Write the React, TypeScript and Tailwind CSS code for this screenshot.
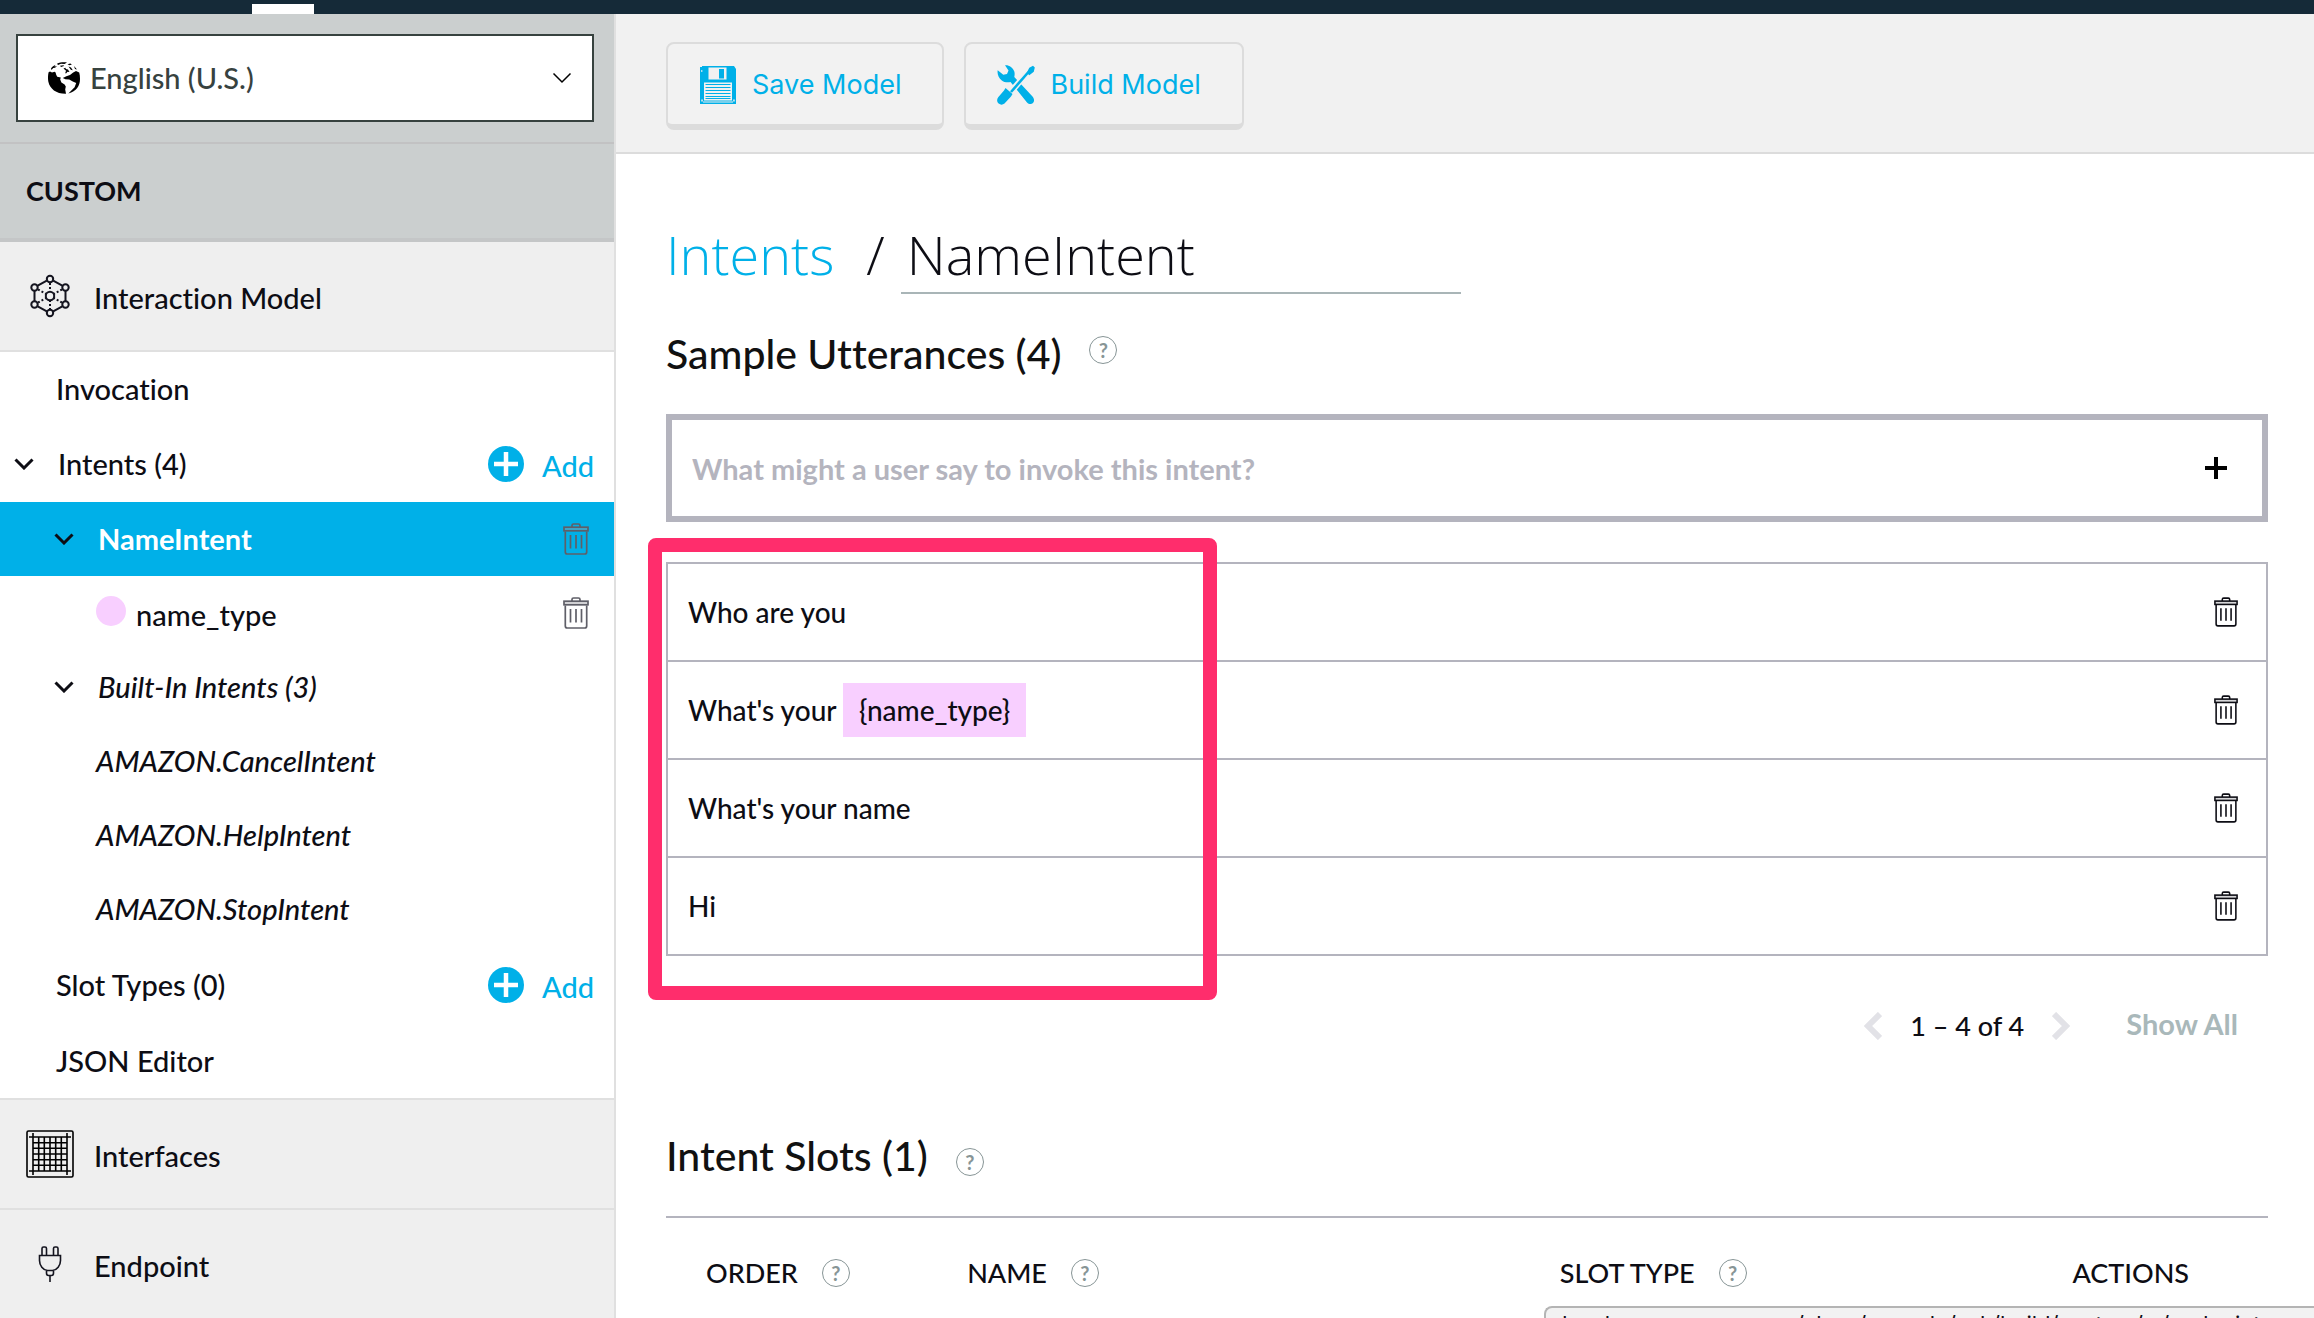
import type { ReactNode } from "react";

type IconProps = { className?: string };

function GlobeIcon() {
  return (
    <svg className="size-8 shrink-0" viewBox="0 0 32 32" fill="#000" aria-hidden="true">
      <path d="M0.6 10.2L2 9.6l2 .8 2.6-.6 1 .6.6 2.400 1 2 3.600.8-.6 1.800 1.200 3 3.200 2.200 1.200 2-.6 3 .8 4.200C8.500 32 1.800 27 .3 19.500-.2 16.500-.1 13 .6 10.200z" />
      <path d="M31.200 10.500L28 9l-2.800 1.400L22 13l-3.600 1.200L14.800 16l2.600 1.200 3.800.4 3.600 2 3.400 1.400-1.600 4.200-3 3-3.200 3.200C28.500 29.600 32 23.500 32 17c0-2.400-.2-4.500-.8-6.500z" />
      <path d="M9 1.800C12 .3 16 0 19 .6L16.500 2 13 1.700 10 3zM19.500 2.200l2.800-.6 1.600.9-2.400.8zM3 6.500C4 5 6 3.500 7.500 2.800L6.500 4.600 9 4.200l-2 1.500-1.800.3L3.500 8zM12 3.800l3.500-.6.5.9-3 .8zM15.500 6.500l2-.8.3 1.300 2.200.6 1.500 2.400-2-.3-1.700 2-.5-1.800 1-.8zM20.500 4.500l2.500 1 1.800 2.700-2-.4zM26 4l3 3.500-2-.5z" />
    </svg>
  );
}

function ModelIcon() {
  const nodes = [[20, 4], [35.500, 12.500], [35.500, 29.500], [20, 38], [4.500, 29.500], [4.500, 12.500]];
  return (
    <svg className="h-11 w-10" viewBox="0 0 40 42" fill="none" stroke="#14141f" strokeWidth="2" aria-hidden="true">
      <path d="M16.800 5.700L7.700 10.700M23.200 5.700l9.100 5M35.500 16v10M32.300 31.300l-9.100 5M16.800 36.300l-9.100-5M4.500 16v10" />
      <path strokeDasharray="2 2" d="M20 8v9M20 25v9M8 14.500l8.500 4.600M32 14.500l-8.500 4.600M8 27.500l8.500-4.600M32 27.500l-8.500-4.600" />
      {nodes.map(([x, y]) => (
        <circle key={`${x}-${y}`} cx={x} cy={y} r="3.200" />
      ))}
      <circle cx="20" cy="21" r="4.200" />
    </svg>
  );
}

function GridIcon() {
  return (
    <svg className="size-12" viewBox="0 0 48 48" fill="none" stroke="#000" strokeWidth="1.600" aria-hidden="true">
      <rect x="1" y="1" width="46" height="46" rx="1.500" />
      <path d="M3 7h42M3 41h42M7 3v42M41 3v42M7 12.700h34M7 18.300h34M7 24h34M7 29.700h34M7 35.300h34M12.700 7v34M18.300 7v34M24 7v34M29.700 7v34M35.300 7v34" />
    </svg>
  );
}

function PlugIcon() {
  return (
    <svg className="h-9 w-6" viewBox="0 0 24 36" fill="none" stroke="#14141f" strokeWidth="1.600" aria-hidden="true">
      <path d="M4 9.500V2.500Q4 1 5.500 1h1.500Q8.500 1 8.500 2.500v7M15.500 9.500V2.500Q15.500 1 17 1h1.500Q20 1 20 2.500v7" />
      <path d="M1.500 9.500h21v5c0 5-3.500 9.500-8 10h-5c-4.500-.5-8-5-8-10zM8.500 24.500h7v2.500q0 2.500-2 2.500h-3q-2 0-2-2.500zM12 29.500V36" />
    </svg>
  );
}

function SaveIcon() {
  return (
    <svg className="h-[38px] w-9" viewBox="0 0 36 38" aria-hidden="true">
      <path fill="#00b0e8" d="M0 1h2v-1h32l2 3v35H0z" />
      <path fill="#f1f1f1" d="M8.500 1.500h18v12h-18zM4 16.500h28v18H4zM1.300 33.500h1.500v2H1.300zM33.200 33.500h1.500v2h-1.500zM1.300 4h1v2h-1z" />
      <path fill="#00b0e8" d="M19 3h5v9.500h-5z" />
      <path stroke="#00b0e8" d="M5.500 18.500h25M5.500 21.500h25M5.500 24.500h25M5.500 27.500h25M5.500 30.500h25M5.500 32.500h25" />
      <path stroke="#f1f1f1" d="M3 36h30" />
    </svg>
  );
}

function ToolsIcon() {
  return (
    <svg className="h-10 w-9" viewBox="1 0 36 40" overflow="visible" aria-hidden="true">
      <path fill="#00b0e8" d="M8 .2C12-.2 16 2.500 17.300 6.500c.6 2 .3 4 0 5.500L35.500 31.500c2 2.500 2 5 .5 6.500s-4 1.500-6-.5L13.500 17c-3 .8-6.500.3-9-1.800C1.500 12.700 0 9 .7 5.300l5.600 4.500 3.700-.7 1.500-3.500z" />
      <path stroke="#f1f1f1" strokeWidth="6" d="M31.500 6.500L15 25.500" />
      <path stroke="#f1f1f1" strokeWidth="13" d="M16.500 24L9 32.500" />
      <path stroke="#00b0e8" strokeWidth="2.600" d="M31.500 7L14 27" />
      <path fill="#00b0e8" d="M36 .8l1.800 1.700-1 4.300-4.500 3.400-2.600-2.400 2.600-5zM8.500 23l7 6-1.500 2.600L7.500 38.500c-1.700 1.500-4.200 1.500-5.800.1-1.900-1.700-2.100-4.500-.5-6.400L7 25.500z" />
    </svg>
  );
}

function TrashIcon({ className = "" }: IconProps) {
  return (
    <svg className={className} viewBox="0 0 26 32" fill="none" stroke="currentColor" strokeWidth="1.700" aria-hidden="true">
      <path d="M9 4V2.500Q9 1 10.500 1h5Q17 1 17 2.500V4" />
      <rect x="1" y="4.200" width="24" height="3.600" fill="#9a9aa0" fillOpacity=".4" />
      <path d="M2.300 8.500v20.500q0 2 2 2h17.400q2 0 2-2V8.500M7.500 12v13.500M13 12v13.500M18.500 12v13.500" />
    </svg>
  );
}

function Chevron({ className = "", weight = 3 }: IconProps & { weight?: number }) {
  return (
    <svg className={className} viewBox="0 0 20 12" fill="none" stroke="currentColor" strokeWidth={weight} aria-hidden="true">
      <path d="M1.500 1.500l8.500 8.500 8.500-8.500" />
    </svg>
  );
}

function PageArrow({ className = "" }: IconProps) {
  return (
    <svg className={`h-7 w-[18px] ${className}`} viewBox="0 0 18 28" fill="none" stroke="#e2e2e7" strokeWidth="6" aria-hidden="true">
      <path d="M16 2L4 14l12 12" />
    </svg>
  );
}

function Help({ label }: { label: string }) {
  return (
    <button
      type="button"
      aria-label={`Help: ${label}`}
      className="flex size-7 shrink-0 items-center justify-center rounded-full border border-[#879596] text-xl leading-none font-bold text-[#879596]"
    >
      ?
    </button>
  );
}

function AddLink({ what }: { what: string }) {
  return (
    <button type="button" aria-label={`Add ${what}`} className="ml-auto flex items-center gap-[18px] pr-5 text-[#00b0e8]">
      <svg className="size-9" viewBox="0 0 36 36" aria-hidden="true">
        <circle cx="18" cy="18" r="18" fill="#00b0e8" />
        <path stroke="#fff" strokeWidth="4.500" d="M18 6v24M6 18h24" />
      </svg>
      <span className="pt-1">Add</span>
    </button>
  );
}

function Row({ className, children }: { className: string; children: ReactNode }) {
  return <li className={`flex items-center ${className}`}>{children}</li>;
}

function Section({ icon, label }: { icon: ReactNode; label: string }) {
  return (
    <a href="#" className="flex h-[110px] items-center gap-5 border-b-2 border-[#e0e0e0] bg-[#efefef] pl-[26px]">
      <span className="flex w-12 justify-center">{icon}</span>
      <span className="pt-1">{label}</span>
    </a>
  );
}

function Sidebar() {
  return (
    <aside className="w-[616px] shrink-0 border-r-2 border-[#e0e0e0]">
      <div className="border-b-2 border-[#c2c2c3] bg-[#cbcfcf] py-5 pr-5 pl-4">
        <div className="relative flex h-[88px] items-center border-2 border-[#37423f] bg-white">
          <span className="pointer-events-none absolute left-[30px]">
            <GlobeIcon />
          </span>
          <select aria-label="Language" className="h-full w-full appearance-none bg-transparent pl-[72px] text-[#37423f]">
            <option>English (U.S.)</option>
          </select>
          <Chevron weight={1.5} className="pointer-events-none absolute right-5 h-3 w-5 text-black" />
        </div>
      </div>
      <h2 className="flex h-[98px] items-center border-b-4 border-[#c4c6c7] bg-[#cbcfcf] pl-[26px] text-[27px] font-bold">CUSTOM</h2>
      <Section icon={<ModelIcon />} label="Interaction Model" />
      <ul>
        <Row className="h-[74px] pl-14"><a href="#">Invocation</a></Row>
        <Row className="h-[76px] pl-[14px]">
          <Chevron className="h-3 w-5" />
          <a href="#" className="pl-6">Intents (4)</a>
          <AddLink what="intent" />
        </Row>
        <Row className="h-[74px] bg-[#00b0e8] pl-[54px]">
          <Chevron className="h-3 w-5" />
          <a href="#" className="pl-6 font-bold text-white">NameIntent</a>
          <button type="button" aria-label="Delete NameIntent" className="mr-[25px] ml-auto text-[#5f5f68]"><TrashIcon className="h-8 w-[26px]" /></button>
        </Row>
        <Row className="h-[74px] pl-24">
          <span className="mb-1 size-[30px] rounded-full bg-[#f8cfff]" />
          <a href="#" className="pt-1 pl-[10px]">name_type</a>
          <button type="button" aria-label="Delete name_type" className="mr-[25px] ml-auto text-[#5f5f68]"><TrashIcon className="h-8 w-[26px]" /></button>
        </Row>
        <Row className="h-[74px] pl-[54px] italic">
          <Chevron className="h-3 w-5" />
          <a href="#" className="pl-6">Built-In Intents (3)</a>
        </Row>
        <Row className="h-[74px] pl-24 italic"><a href="#">AMAZON.CancelIntent</a></Row>
        <Row className="h-[74px] pl-24 italic"><a href="#">AMAZON.HelpIntent</a></Row>
        <Row className="h-[74px] pl-24 italic"><a href="#">AMAZON.StopIntent</a></Row>
        <Row className="h-[78px] pl-14">
          <a href="#">Slot Types (0)</a>
          <AddLink what="slot type" />
        </Row>
        <Row className="h-[76px] border-b-2 border-[#e0e0e0] pl-14"><a href="#">JSON Editor</a></Row>
      </ul>
      <Section icon={<GridIcon />} label="Interfaces" />
      <Section icon={<PlugIcon />} label="Endpoint" />
    </aside>
  );
}

function ToolbarButton({ icon, label }: { icon: ReactNode; label: string }) {
  return (
    <button
      type="button"
      className="flex h-[88px] items-center gap-4 rounded-lg border-2 border-b-6 border-[#dcdcdc] bg-[#f2f2f2] pt-0.5 pr-[41px] pl-8 font-['Inter',sans-serif] text-[27px] font-normal text-[#00b0e8]"
    >
      {icon}
      {label}
    </button>
  );
}

const utterances: { id: string; text: string; slot?: string }[] = [
  { id: "who", text: "Who are you" },
  { id: "slot", text: "What's your ", slot: "{name_type}" },
  { id: "name", text: "What's your name" },
  { id: "hi", text: "Hi" },
];

const columns = [
  { label: "ORDER", help: true, width: "w-[16.3%]" },
  { label: "NAME", help: true, width: "w-[37%]" },
  { label: "SLOT TYPE", help: true, width: "w-[32%]" },
  { label: "ACTIONS", help: false, width: "" },
];

function Content() {
  return (
    <main className="min-w-0 grow">
      <div className="flex gap-5 border-b-2 border-[#dcdcdc] bg-[#f1f1f1] pt-7 pb-[22px] pl-[50px]">
        <ToolbarButton icon={<SaveIcon />} label="Save Model" />
        <ToolbarButton icon={<ToolsIcon />} label="Build Model" />
      </div>

      <div className="pt-[62px] pr-[46px] pl-[50px]">
        <div className="flex items-start font-['Open_Sans',sans-serif] text-[54px] leading-[76px] font-light">
          <a href="#" className="text-[#00b0e8]">Intents</a>
          <span className="pl-8">/</span>
          <input
            aria-label="Intent name"
            defaultValue="NameIntent"
            className="ml-4 h-[78px] w-[560px] border-b-2 border-[#a9b5b7] pl-1.5 outline-none"
          />
        </div>

        <div className="mt-[30px] flex h-[60px] items-center gap-7">
          <h1 className="text-[41px] font-medium text-[#111]">Sample Utterances (4)</h1>
          <span className="pb-2"><Help label="Sample Utterances" /></span>
        </div>

        <form className="mt-[30px] flex h-[108px] items-center border-6 border-[#b4b4be] pr-[35px] pl-5">
          <input
            aria-label="Sample utterance"
            placeholder="What might a user say to invoke this intent?"
            className="h-full min-w-0 grow font-bold outline-none placeholder:text-[#b4b4be] placeholder:opacity-100"
          />
          <button type="button" aria-label="Add utterance">
            <svg className="size-[22px]" viewBox="0 0 22 22" stroke="#000" strokeWidth="4" aria-hidden="true">
              <path d="M11 0v22M0 11h22" />
            </svg>
          </button>
        </form>

        <div className="relative mt-10">
          <ul className="border-2 border-[#b4b4be] text-[28px]">
            {utterances.map((u) => (
              <li key={u.id} className="flex h-[98px] items-center border-b-2 border-[#b4b4be] pr-7 pl-5 last:h-24 last:border-b-0">
                <span className="whitespace-pre">{u.text}</span>
                {u.slot && <span className="flex h-[54px] items-center bg-[#f8cfff] px-4">{u.slot}</span>}
                <button type="button" aria-label={`Delete ${u.text}`} className="ml-auto">
                  <TrashIcon className="h-[30px] w-6" />
                </button>
              </li>
            ))}
          </ul>
          <div className="pointer-events-none absolute -top-6 -bottom-11 -left-[18px] w-[569px] rounded-lg border-14 border-[#ff2d6c]" />
        </div>

        <nav aria-label="Utterance pages" className="mt-10 flex h-[60px] items-center justify-end pr-[30px]">
          <button type="button" aria-label="Previous page"><PageArrow /></button>
          <span className="px-7 text-[27px]">1 – 4 of 4</span>
          <button type="button" aria-label="Next page"><PageArrow className="rotate-180" /></button>
          <button type="button" className="pb-1 pl-14 font-bold text-[#a9b8ba]">Show All</button>
        </nav>

        <div className="mt-[70px] flex h-[60px] items-center gap-7">
          <h1 className="text-[41px] font-medium text-[#111]">Intent Slots (1)</h1>
          <span className="pt-3"><Help label="Intent Slots" /></span>
        </div>

        <table className="mt-[30px] w-full table-fixed border-t-2 border-[#b4b4be] text-[27px]">
          <thead>
            <tr>
              {columns.map((c) => (
                <th key={c.label} scope="col" className={`h-[110px] pl-10 text-left font-medium ${c.width}`}>
                  <span className="flex items-center gap-6">
                    {c.label}
                    {c.help && <Help label={c.label} />}
                  </span>
                </th>
              ))}
            </tr>
          </thead>
        </table>
      </div>
    </main>
  );
}

export default function App() {
  return (
    <div className="h-screen overflow-hidden bg-white font-['Lato',sans-serif] text-[29px] leading-9 font-medium text-[#0d0d14] [font-variant-ligatures:none]">
      <header className="flex h-[14px] items-end bg-[#152a38]">
        <span className="ml-[252px] h-[10px] w-[62px] bg-white" />
      </header>
      <div className="flex">
        <Sidebar />
        <Content />
      </div>
      <div className="fixed right-0 bottom-0 h-3 w-[770px] overflow-hidden rounded-tl-lg border-t-2 border-l-2 border-[#b4b4b4] bg-[#f2f2f2] pt-0.5 pl-2 font-['Inter',sans-serif] text-[22px] leading-7 font-normal whitespace-nowrap">
        developer.amazon.com/alexa/console/ask/build/custom/…/endpoint
      </div>
    </div>
  );
}
